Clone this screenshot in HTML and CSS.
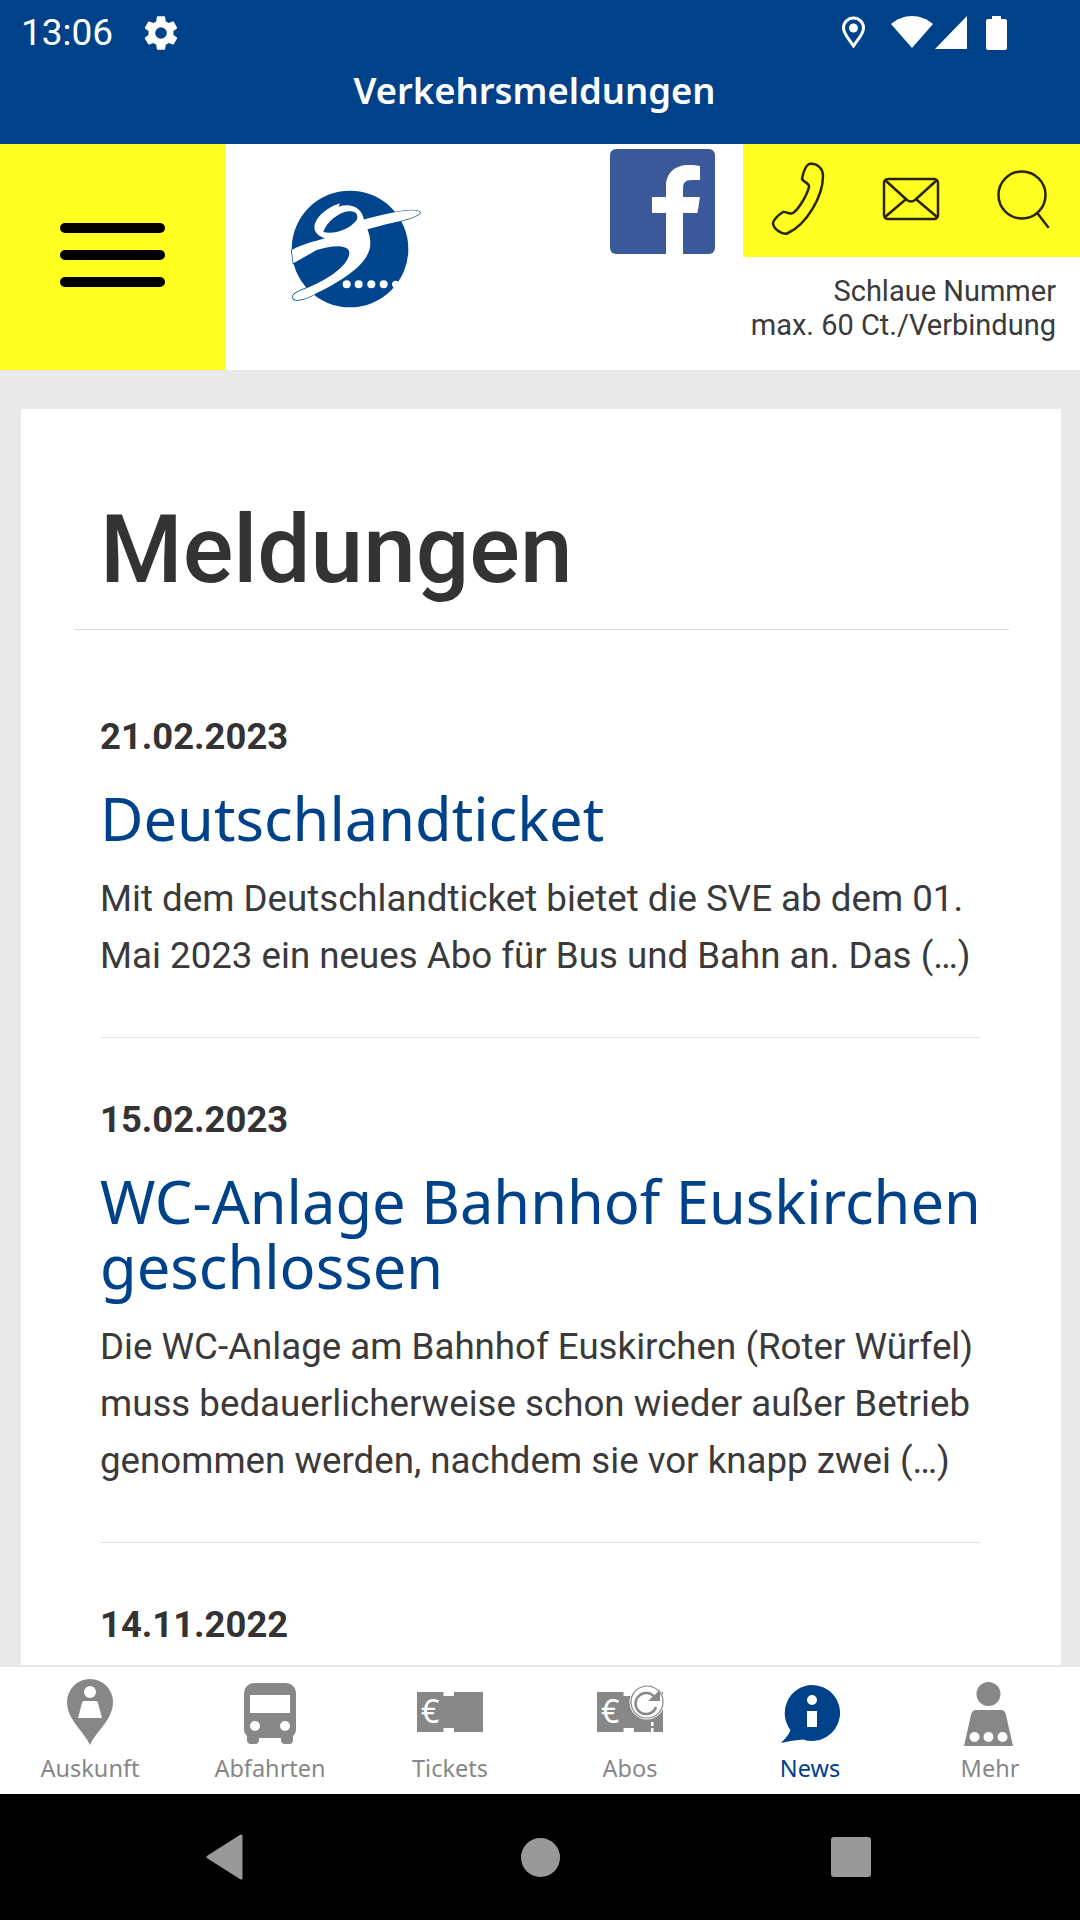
FILE: index.html
```html
<!DOCTYPE html>
<html lang="de">
<head>
<meta charset="utf-8">
<title>Verkehrsmeldungen</title>
<link rel="stylesheet" href="styles.css">
</head>
<body>
<div class="phone">
  <header class="appbar">
    <div class="status">
      <span class="time">13:06</span>
      <svg class="gear" viewBox="0 0 24 24"><path d="M19.4 13c.04-.32.07-.66.07-1s-.03-.68-.07-1l2.1-1.65c.2-.15.25-.42.13-.64l-2-3.46c-.12-.22-.39-.3-.61-.22l-2.49 1c-.52-.4-1.08-.73-1.69-.98l-.38-2.65A.49.49 0 0 0 14 2h-4c-.25 0-.46.18-.49.42l-.38 2.65c-.61.25-1.17.59-1.69.98l-2.49-1a.5.5 0 0 0-.61.22l-2 3.46c-.13.22-.07.49.12.64L4.57 11c-.04.32-.07.66-.07 1s.03.68.07 1l-2.11 1.65c-.19.15-.25.42-.12.64l2 3.46c.12.22.39.3.61.22l2.49-1c.52.4 1.08.73 1.69.98l.38 2.65c.03.24.24.42.49.42h4c.25 0 .46-.18.49-.42l.38-2.65c.61-.25 1.17-.59 1.69-.98l2.49 1c.22.08.49 0 .61-.22l2-3.46c.12-.22.07-.49-.13-.64L19.4 13zM12 15.5a3.5 3.5 0 1 1 0-7 3.5 3.5 0 0 1 0 7z"/></svg>
      <span class="status-gap"></span>
      <svg class="loc" viewBox="0 0 25 32"><path d="M12.5 30 C8 23 2.5 18 2.5 12 A10 10 0 0 1 22.5 12 C22.5 18 17 23 12.5 30Z" fill="none" stroke="#fff" stroke-width="3"/><circle cx="12.5" cy="12" r="4.5" fill="#fff"/></svg>
      <svg class="wifi" viewBox="0 0 42 32"><path d="M21 32 L0 8 C6 3 13 0 21 0 C29 0 36 3 42 8Z" fill="#fff"/></svg>
      <svg class="signal" viewBox="0 0 32 33"><path d="M32 0 V33 H0Z" fill="#fff"/></svg>
      <svg class="battery" viewBox="0 0 21 34"><path d="M6 0 H15 V3 H19 A2 2 0 0 1 21 5 V32 A2 2 0 0 1 19 34 H2 A2 2 0 0 1 0 32 V5 A2 2 0 0 1 2 3 H6Z" fill="#fff"/></svg>
    </div>
    <h1 class="apptitle">Verkehrsmeldungen</h1>
  </header>

  <section class="brand">
    <button class="menu" aria-label="Menü"><span></span><span></span><span></span></button>
    <svg class="logo" viewBox="0 0 540 450">
      <circle cx="270" cy="237" r="175" fill="#00468f"/>
      <g fill="#fff" stroke="#00468f" stroke-width="4">
        <path d="M480 128 C470 112 400 125 300 152 L310 182 C380 158 470 148 480 128Z"/>
        <path d="M240 100 L236 110 C270 98 306 110 312 150 C320 175 338 205 328 240 C312 292 240 335 165 372 C130 392 100 395 98 382 C97 370 120 362 150 350 C210 325 265 285 268 250 C270 225 225 222 170 240 L100 280 L95 240 C130 222 160 215 195 205 C165 195 155 175 170 150 C185 125 215 108 240 100Z"/>
      </g>
      <g fill="#fff">
        <path d="M480 128 C470 112 400 125 300 152 L310 182 C380 158 470 148 480 128Z"/>
        <path d="M240 100 L236 110 C270 98 306 110 312 150 C320 175 338 205 328 240 C312 292 240 335 165 372 C130 392 100 395 98 382 C97 370 120 362 150 350 C210 325 265 285 268 250 C270 225 225 222 170 240 L100 280 L95 240 C130 222 160 215 195 205 C165 195 155 175 170 150 C185 125 215 108 240 100Z"/>
      </g>
      <path d="M190 186 C200 155 235 128 265 124 C288 121 296 135 290 150 C272 176 225 195 190 186Z" fill="#00468f"/>
      <circle cx="260" cy="343" r="12" fill="#fff"/><circle cx="296" cy="343" r="12" fill="#fff"/><circle cx="334" cy="343" r="12" fill="#fff"/><circle cx="371" cy="343" r="12" fill="#fff"/><circle cx="407" cy="343" r="11" fill="#fff"/>
    </svg>
    <div class="fb"><svg viewBox="0 0 105 105"><rect width="105" height="105" rx="6" fill="#3b5998"/><path d="M56 105 V64 H42 V48 H56 V37 C56 24 65 16 79 16 C84 16 88 16.500 90 17 V31 H82 C75 31 73 34 73 40 V48 H90 L87.500 64 H73 V105Z" fill="#fff"/></svg></div>
    <div class="contact">
      <div class="contact-icons">
        <svg class="i-phone" viewBox="0 0 54 74"><path d="M38 2 C46 1 52 6 52 14 C52 34 36 62 17 71 C11 74 2 66 2 61 C3 57 9 52 12 50 C15 49 18 53 22 51 C28 47 36 33 38 25 C39 21 32 20 31 17 C32 12 33 5 38 2Z"/></svg>
        <svg class="i-mail" viewBox="0 0 58 44"><rect x="2" y="2" width="54" height="40" rx="4"/><path d="M3 3 L25 23 Q29 26 33 23 L55 3 M3 40 L23 23 M55 40 L35 23"/></svg>
        <svg class="i-search" viewBox="0 0 54 58"><circle cx="25" cy="25" r="23.500"/><path d="M41 44 L51 57"/></svg>
      </div>
      <p class="hotline">Schlaue Nummer<br>max. 60 Ct./Verbindung</p>
    </div>
  </section>

  <main class="content">
    <div class="card">
      <h2 class="page-title">Meldungen</h2>
      <article class="news first">
        <div class="date">21.02.2023</div>
        <h3 class="headline">Deutschlandticket</h3>
        <p class="teaser">Mit dem Deutschlandticket bietet die SVE ab dem 01. Mai 2023 ein neues Abo für Bus und Bahn an. Das (…)</p>
      </article>
      <article class="news">
        <div class="date">15.02.2023</div>
        <h3 class="headline">WC-Anlage Bahnhof Euskirchen geschlossen</h3>
        <p class="teaser">Die WC-Anlage am Bahnhof Euskirchen (Roter Würfel) muss bedauerlicherweise schon wieder außer Betrieb genommen werden, nachdem sie vor knapp zwei (…)</p>
      </article>
      <article class="news">
        <div class="date">14.11.2022</div>
      </article>
    </div>
  </main>

  <nav class="tabs">
    <a class="tab">
      <svg viewBox="0 0 80 70"><path d="M40 67 C34 53 17 42 17 24 A23 23 0 0 1 63 24 C63 42 46 53 40 67Z"/><circle cx="40" cy="14" r="6" fill="#fff"/><path d="M34 23 H46 Q47.500 23 48 25 L52 40 H28 L32 25 Q32.500 23 34 23Z" fill="#fff"/></svg>
      <span>Auskunft</span>
    </a>
    <a class="tab">
      <svg viewBox="0 0 80 70"><path d="M24 5 H56 A10 10 0 0 1 66 15 V52 A8 8 0 0 1 63 58 V62 A4 4 0 0 1 59 66 H55 A4 4 0 0 1 51 62 V60 H29 V62 A4 4 0 0 1 25 66 H21 A4 4 0 0 1 17 62 V58 A8 8 0 0 1 14 52 V15 A10 10 0 0 1 24 5Z"/><rect x="20" y="17" width="40" height="18" fill="#fff"/><circle cx="25" cy="48" r="5" fill="#fff"/><circle cx="55" cy="48" r="5" fill="#fff"/></svg>
      <span>Abfahrten</span>
    </a>
    <a class="tab">
      <svg viewBox="0 0 80 70"><path d="M7 14 H33.500 V18 H44 V14 H73 V54 H44 V50 H33.500 V54 H7Z"/><text x="11" y="45" class="euro">€</text></svg>
      <span>Tickets</span>
    </a>
    <a class="tab">
      <svg viewBox="0 0 80 70"><path d="M7 14 H33.500 V18 H44 V14 H73 V54 H44 V50 H33.500 V54 H7Z"/><text x="11" y="45" class="euro">€</text><circle cx="57" cy="24" r="17.500" fill="#fff"/><circle cx="57" cy="24" r="16" fill="#fff" stroke="#878787" stroke-width="1.200"/><path d="M65 20 A10.500 10.500 0 1 0 66 29" fill="none" stroke="#878787" stroke-width="2.500"/><path d="M58 23 H70 V12Z"/><rect x="61" y="44" width="2.500" height="4" fill="#fff"/><rect x="61" y="50" width="2.500" height="4" fill="#fff"/></svg>
      <span>Abos</span>
    </a>
    <a class="tab active">
      <svg viewBox="0 0 80 70"><path d="M42 7 A28 28 0 1 1 33 61.500 Q22 62 11 65 Q19 57 20.500 52 A28 28 0 0 1 42 7Z"/><circle cx="42" cy="22" r="5" fill="#fff"/><rect x="37" y="33" width="10" height="16" fill="#fff"/></svg>
      <span>News</span>
    </a>
    <a class="tab">
      <svg viewBox="0 0 80 70"><circle cx="38.500" cy="16" r="12"/><path d="M26 32 H51 Q55 32 56 37 L63 68 H14 L21 37 Q22 32 26 32Z"/><circle cx="24.500" cy="59" r="5" fill="#fff"/><circle cx="38.500" cy="59" r="5" fill="#fff"/><circle cx="52.500" cy="59" r="5" fill="#fff"/></svg>
      <span>Mehr</span>
    </a>
  </nav>

  <footer class="sysnav">
    <svg class="back" viewBox="0 0 38 46"><path d="M35 2 V44 L2 23Z" fill="#999" stroke="#999" stroke-width="3" stroke-linejoin="round"/></svg>
    <span class="home"></span>
    <span class="recent"></span>
  </footer>
</div>
</body>
</html>
```

FILE: styles.css
```css
* { box-sizing: border-box; }
html, body { margin: 0; padding: 0; }
body { font-family: Roboto, "Liberation Sans", sans-serif; color: #333; background: #000; }
.phone { width: 1080px; height: 1920px; display: flex; flex-direction: column; overflow: hidden; }

.appbar { height: 144px; background: #00428a; color: #fff; flex: none; }
.status { height: 64px; display: flex; align-items: flex-start; padding: 16px 0 0 21px; }
.time { font-size: 37px; line-height: 34px; width: 120px; }
.gear { width: 40px; height: 40px; fill: #fff; margin-top: -3px; }
.status-gap { width: 660px; flex: none; }
.loc { width: 25px; height: 32px; flex: none; }
.wifi { width: 42px; height: 32px; margin-left: 25px; flex: none; }
.signal { width: 32px; height: 33px; margin-left: 2px; flex: none; }
.battery { width: 21px; height: 34px; margin-left: 19px; flex: none; }
.apptitle { margin: 0; padding-right: 11px; text-align: center; font: 600 36.4px/52px "Noto Sans", sans-serif; }

.brand { height: 226px; background: #fff; display: flex; flex: none; align-items: flex-start; }
.menu { width: 226px; height: 226px; background: #ffff22; border: 0; padding: 79px 0 0 60px; display: flex; flex-direction: column; gap: 17px; flex: none; }
.menu span { display: block; width: 105px; height: 10px; border-radius: 5px; background: #000; }
.logo { width: 180px; height: 150px; margin: 26px 0 0 34px; flex: none; }
.fb { width: 105px; height: 105px; margin: 5px 0 0 170px; flex: none; }
.fb svg { display: block; width: 105px; height: 105px; }
.contact { width: 337px; margin-left: 28px; flex: none; }
.contact-icons { height: 113px; background: #ffff22; display: flex; padding: 18px 0 0 28px; align-items: flex-start; }
.contact-icons svg { fill: none; stroke: #2a2500; stroke-width: 2.5; stroke-linecap: round; stroke-linejoin: round; flex: none; }
.i-phone { width: 54px; height: 74px; }
.i-mail { width: 58px; height: 44px; margin: 15px 0 0 57px; }
.i-search { width: 54px; height: 58px; margin: 8px 0 0 57px; }
.hotline { margin: 17px 24px 0 0; text-align: right; font-size: 29px; line-height: 34px; color: #3a3a3a; }

.content { flex: 1; min-height: 0; background: #e9e9e9; padding: 39px 19px 0 21px; overflow: hidden; }
.card { background: #fff; height: 1300px; padding: 85px 52px 0 53px; }
.page-title { margin: 0; padding: 0 0 23px 26px; font-size: 94.5px; line-height: 112px; font-weight: 500; border-bottom: 1px solid #ddd; }
.news { margin: 0 28px 0 26px; padding: 0 0 53px; border-bottom: 1px solid #e4e4e4; }
.news:last-child { border-bottom: 0; }
.news.first { padding-top: 25px; }
.date { font-size: 36.4px; line-height: 44px; font-weight: 700; padding-top: 60px; }
.headline { margin: 26px 0 0; font: 400 59.6px/65px "Noto Sans", sans-serif; color: #00428a; }
.teaser { margin: 20px 0 0; font-size: 36.7px; line-height: 57px; color: #3a3a3a; }

.tabs { height: 129px; flex: none; background: #fff; border-top: 2px solid #e6e6e6; display: grid; grid-template-columns: repeat(6, 1fr); }
.tab { display: flex; flex-direction: column; align-items: center; color: #878787; font: 400 23.5px/32px "Noto Sans", sans-serif; padding-top: 11px; }
.tab svg { width: 80px; height: 70px; fill: #878787; flex: none; }
.tab span { margin-top: 4px; }
.tab.active { color: #00428a; }
.tab.active svg { fill: #00428a; }
.euro { font: 400 32px "Noto Sans", sans-serif; fill: #fff; }

.sysnav { height: 126px; flex: none; background: #000; display: flex; align-items: center; justify-content: center; padding-right: 4px; }
.back { width: 38px; height: 46px; margin-right: 277px; }
.home { width: 39px; height: 39px; border-radius: 50%; background: #999; margin-right: 271px; }
.recent { width: 40px; height: 40px; border-radius: 3px; background: #999; }
```
